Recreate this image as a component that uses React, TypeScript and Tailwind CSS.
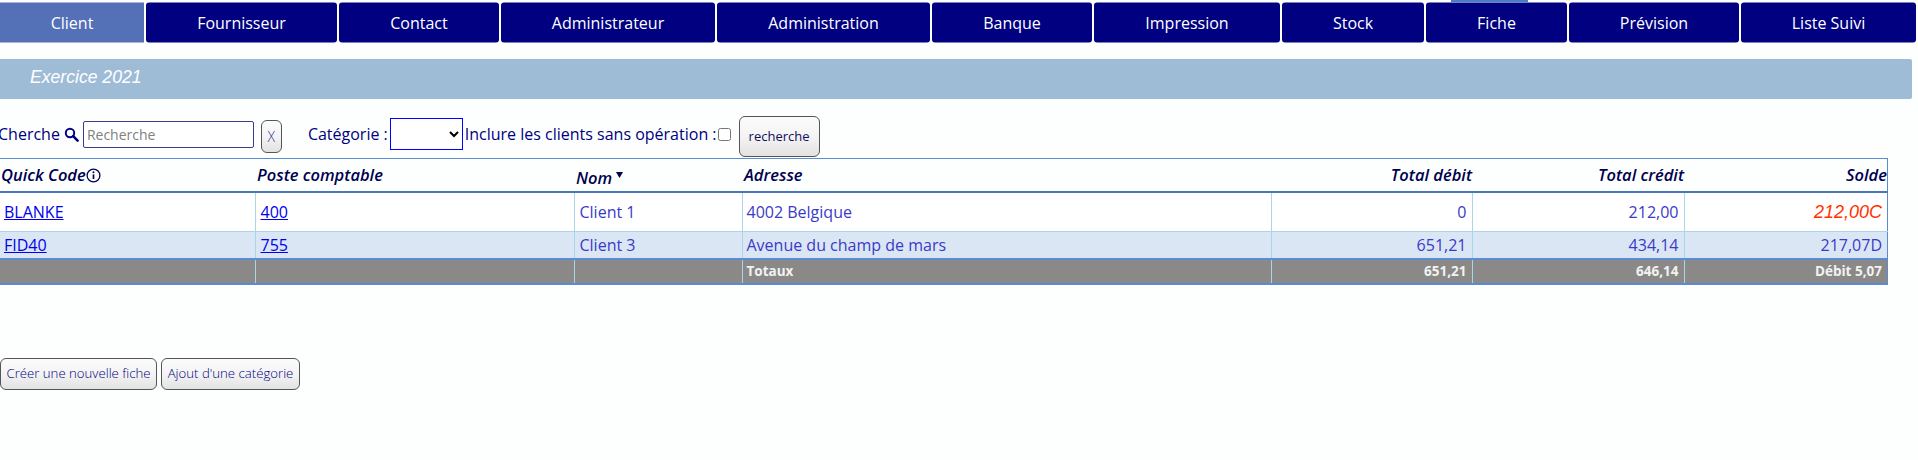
const tabs = [
  { label: "Client", width: "w-[144px]", active: true },
  { label: "Fournisseur", width: "w-[191px]" },
  { label: "Contact", width: "w-[160px]" },
  { label: "Administrateur", width: "w-[214px]" },
  { label: "Administration", width: "w-[213px]" },
  { label: "Banque", width: "w-[160px]" },
  { label: "Impression", width: "w-[186px]" },
  { label: "Stock", width: "w-[142px]" },
  { label: "Fiche", width: "w-[141px]" },
  { label: "Prévision", width: "w-[170px]" },
  { label: "Liste Suivi", width: "w-[175px]" },
];

const btn =
  "rounded-[6px] border border-[#555] bg-gradient-to-b from-[#fbfbfb] via-[#f4f4f4] to-[#e2e2e2]";
const td = "border-x border-[#a9d5e9] px-1 first:border-l-0 last:border-r-0";
const num = "text-right pr-[5px]";
const th = "font-semibold italic text-[16.5px] text-[#000050] text-left px-0.5";

const SearchIcon = () => (
  <svg width="15" height="15" viewBox="0 0 15 15" className="shrink-0">
    <circle cx="6" cy="6" r="4.2" fill="none" stroke="#000080" strokeWidth="2" />
    <path d="M9.2 9.2 L13.6 13.6" stroke="#000080" strokeWidth="2.6" strokeLinecap="round" />
  </svg>
);

const InfoIcon = () => (
  <svg width="15" height="15" viewBox="0 0 15 15" className="inline-block align-[-2px]">
    <circle cx="7.5" cy="7.5" r="6.4" fill="none" stroke="#000050" strokeWidth="1.3" />
    <path d="M7.5 6.4 V11" stroke="#000050" strokeWidth="1.7" />
    <circle cx="7.5" cy="4.2" r="1" fill="#000050" />
  </svg>
);

export default function App() {
  return (
    <div className="relative h-[460px] w-[1918px] overflow-hidden bg-[#fdfffe] font-['Open_Sans',sans-serif]">
      {/* scrap of the menu above, cut by the screenshot */}
      <div className="absolute left-[1451px] top-0 h-[2px] w-[77px] bg-[#4a7cc7]" />

      <nav className="mt-[2px] flex h-[40px] translate-y-[0.5px] gap-[2px]">
        {tabs.map((t) => (
          <div
            key={t.label}
            className={`${t.width} flex items-center justify-center text-[16px] text-white ${
              t.active ? "bg-[#5470b6]" : "rounded-[3px] bg-[#000080]"
            }`}
          >
            {t.label}
          </div>
        ))}
      </nav>

      <div className="mt-[17px] flex h-[40px] w-[1912px] items-center rounded-r-[2px] bg-[#9fbcd7] pb-[4px] pl-[30px] font-['Liberation_Sans',sans-serif] text-[17.6px] italic text-white">
        Exercice 2021
      </div>

      <div className="flex h-[59px] items-start text-[16px] text-[#000080]">
        <span className="-ml-[2px] mt-[23px] leading-[24px]">Cherche</span>
        <span className="ml-[4px] mt-[28px]">
          <SearchIcon />
        </span>
        <input
          placeholder="Recherche"
          className="ml-[4px] mt-[22px] h-[27px] w-[171px] rounded-[2px] border border-[#3d3d8f] bg-white px-[3px] text-[14px] outline-none placeholder:text-[#808080]"
        />
        <div
          className={`${btn} ml-[7px] mt-[21px] flex h-[33px] w-[21px] items-center justify-center text-[14px] font-light text-[#2f2fa0]`}
        >
          X
        </div>
        <span className="ml-[26px] mt-[23px] leading-[24px]">Catégorie :</span>
        <select className="ml-[2px] mt-[19px] h-[32px] w-[73px] border border-[#0000ff] bg-white text-black outline-none" />
        <span className="ml-[2px] mt-[23px] leading-[24px]">Inclure les clients sans opération :</span>
        <input type="checkbox" className="ml-[1px] mt-[29px] h-[13px] w-[13px]" />
        <div
          className={`${btn} ml-[8px] mt-[17px] flex h-[41px] w-[81px] items-center justify-center text-[13px] text-[#10105a]`}
        >
          recherche
        </div>
      </div>

      <table className="w-[1888px] table-fixed border-collapse border-r border-t border-[#5b8bd0] text-[16px] text-[#3a3ac8]">
        <colgroup>
          <col className="w-[255px]" />
          <col className="w-[319px]" />
          <col className="w-[168px]" />
          <col className="w-[529px]" />
          <col className="w-[201px]" />
          <col className="w-[212px]" />
          <col />
        </colgroup>
        <thead>
          <tr className="h-[33px] border-b-2 border-b-[#4a77b8]">
            <th className={`${th} pl-[1px]`}>
              Quick Code
              <InfoIcon />
            </th>
            <th className={th}>Poste comptable</th>
            <th className={`${th} pt-[7px]`}>
              Nom
              <svg width="7" height="6" viewBox="0 0 7 6" className="mb-[9px] ml-[4px] inline-block">
                <polygon points="0,0 7,0 3.5,6" fill="#000050" />
              </svg>
            </th>
            <th className={th}>Adresse</th>
            <th className={`${th} pr-0 text-right`}>Total débit</th>
            <th className={`${th} pr-0 text-right`}>Total crédit</th>
            <th className={`${th} pr-0 text-right`}>Solde</th>
          </tr>
        </thead>
        <tbody>
          <tr className="h-[40px] border-b border-[#a9d5e9] bg-white">
            <td className={td}>
              <a href="#" className="text-[#0000ee] underline">BLANKE</a>
            </td>
            <td className={`${td} pl-[5px]`}>
              <a href="#" className="text-[#0000ee] underline">400</a>
            </td>
            <td className={`${td} pl-[5px]`}>Client 1</td>
            <td className={td}>4002 Belgique</td>
            <td className={`${td} ${num}`}>0</td>
            <td className={`${td} ${num}`}>212,00</td>
            <td className={`${td} ${num} font-['Liberation_Sans',sans-serif] text-[18px] italic text-[#ff3300]`}>212,00C</td>
          </tr>
          <tr className="h-[27px] border-b-2 border-b-[#5b8bd0] bg-[#dbe6f5]">
            <td className={td}>
              <a href="#" className="text-[#0000ee] underline">FID40</a>
            </td>
            <td className={`${td} pl-[5px]`}>
              <a href="#" className="text-[#0000ee] underline">755</a>
            </td>
            <td className={`${td} pl-[5px]`}>Client 3</td>
            <td className={td}>Avenue du champ de mars</td>
            <td className={`${td} ${num}`}>651,21</td>
            <td className={`${td} ${num}`}>434,14</td>
            <td className={`${td} ${num}`}>217,07D</td>
          </tr>
          <tr className="h-[25px] border-b-2 border-b-[#5b8bd0] bg-[#8a8987] text-[13.5px] font-bold text-[#f2f2f2]">
            <td className={td}></td>
            <td className={td}></td>
            <td className={td}></td>
            <td className={td}>Totaux</td>
            <td className={`${td} ${num}`}>651,21</td>
            <td className={`${td} ${num}`}>646,14</td>
            <td className={`${td} ${num}`}>Débit 5,07</td>
          </tr>
        </tbody>
      </table>

      <div className="mt-[73px] flex gap-[4px] text-[13.2px] font-light text-[#000080]">
        <div className={`${btn} flex h-[32px] w-[157px] items-center justify-center`}>Créer une nouvelle fiche</div>
        <div className={`${btn} flex h-[32px] w-[139px] items-center justify-center`}>Ajout d'une catégorie</div>
      </div>
    </div>
  );
}
